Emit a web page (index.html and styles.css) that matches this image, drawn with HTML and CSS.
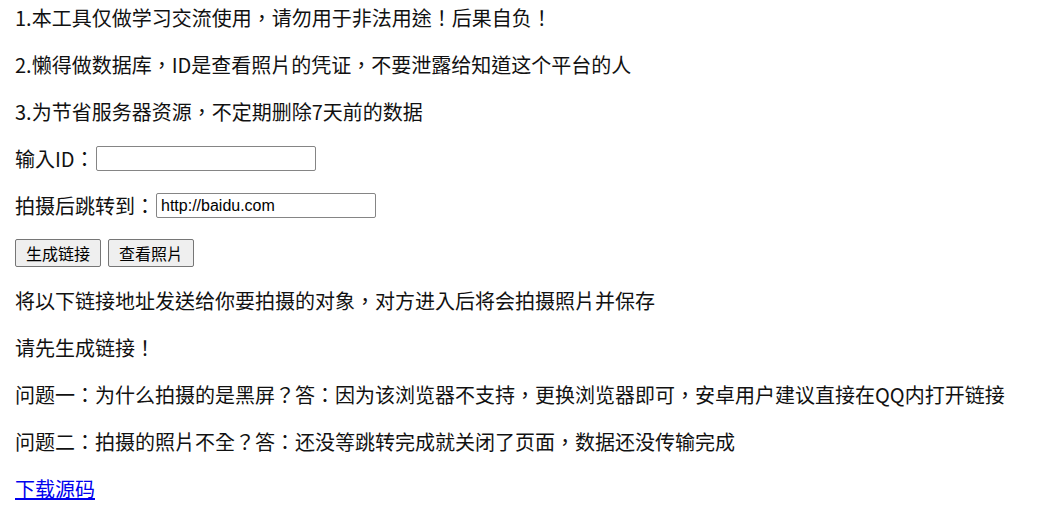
FILE: index.html
```html
<!DOCTYPE html>
<html lang="zh-TW">

<head>
    <meta charset="utf-8">
    <meta name="viewport" content="width=device-width, initial-scale=1.0">
    <title>拍照</title>
    <link rel="stylesheet" href="styles.css">
</head>

<body>
    <p>1.本工具仅做学习交流使用，请勿用于非法用途！后果自负！</p>
    <p>2.懒得做数据库，ID是查看照片的凭证，不要泄露给知道这个平台的人</p>
    <p>3.为节省服务器资源，不定期删除7天前的数据</p>

    <p class="field">输入ID：<input type="text" id="uid" class="box"></p>
    <p class="field">拍摄后跳转到：<input type="text" id="jump" class="box" value="http://baidu.com"></p>

    <p class="knapper">
        <button id="lav">生成链接</button>
        <button id="vis">查看照片</button>
    </p>

    <p>将以下链接地址发送给你要拍摄的对象，对方进入后将会拍摄照片并保存</p>
    <p id="link">请先生成链接！</p>

    <p>问题一：为什么拍摄的是黑屏？答：因为该浏览器不支持，更换浏览器即可，安卓用户建议直接在QQ内打开链接</p>
    <p>问题二：拍摄的照片不全？答：还没等跳转完成就关闭了页面，数据还没传输完成</p>

    <p><a href="#">下载源码</a></p>
</body></html>
```

FILE: styles.css
```css
/* simpel side */

body {
    margin: 4px 15px;
    font-family: "Microsoft YaHei", "Noto Sans CJK TC", sans-serif;
    font-size: 20px;
    color: #111;
    background-color: #fff;
}

p {
    margin: 0 0 20px;
    line-height: 27px;
    white-space: nowrap;
}

.field {
    display: flex;
    align-items: center;
}

.box {
    width: 220px;
    height: 25px;
    box-sizing: border-box;
    padding: 1px 4px;
    margin: 0 0 0 1px;
    border: 1px solid #858585;
    border-radius: 2px;
    font-family: "Liberation Sans", Arial, sans-serif;
    font-size: 16px;
    color: #000;
}

.knapper {
    display: flex;
    gap: 7px;
}

button {
    height: 28px;
    padding: 0 10px;
    margin: 0;
    font-family: "Noto Sans CJK TC", sans-serif;
    font-size: 16px;
    line-height: 26px;
    color: #000;
    background-color: #efefef;
    border: 1px solid #767676;
    border-radius: 2px;
}

a {
    color: #0000ee;
}
```
